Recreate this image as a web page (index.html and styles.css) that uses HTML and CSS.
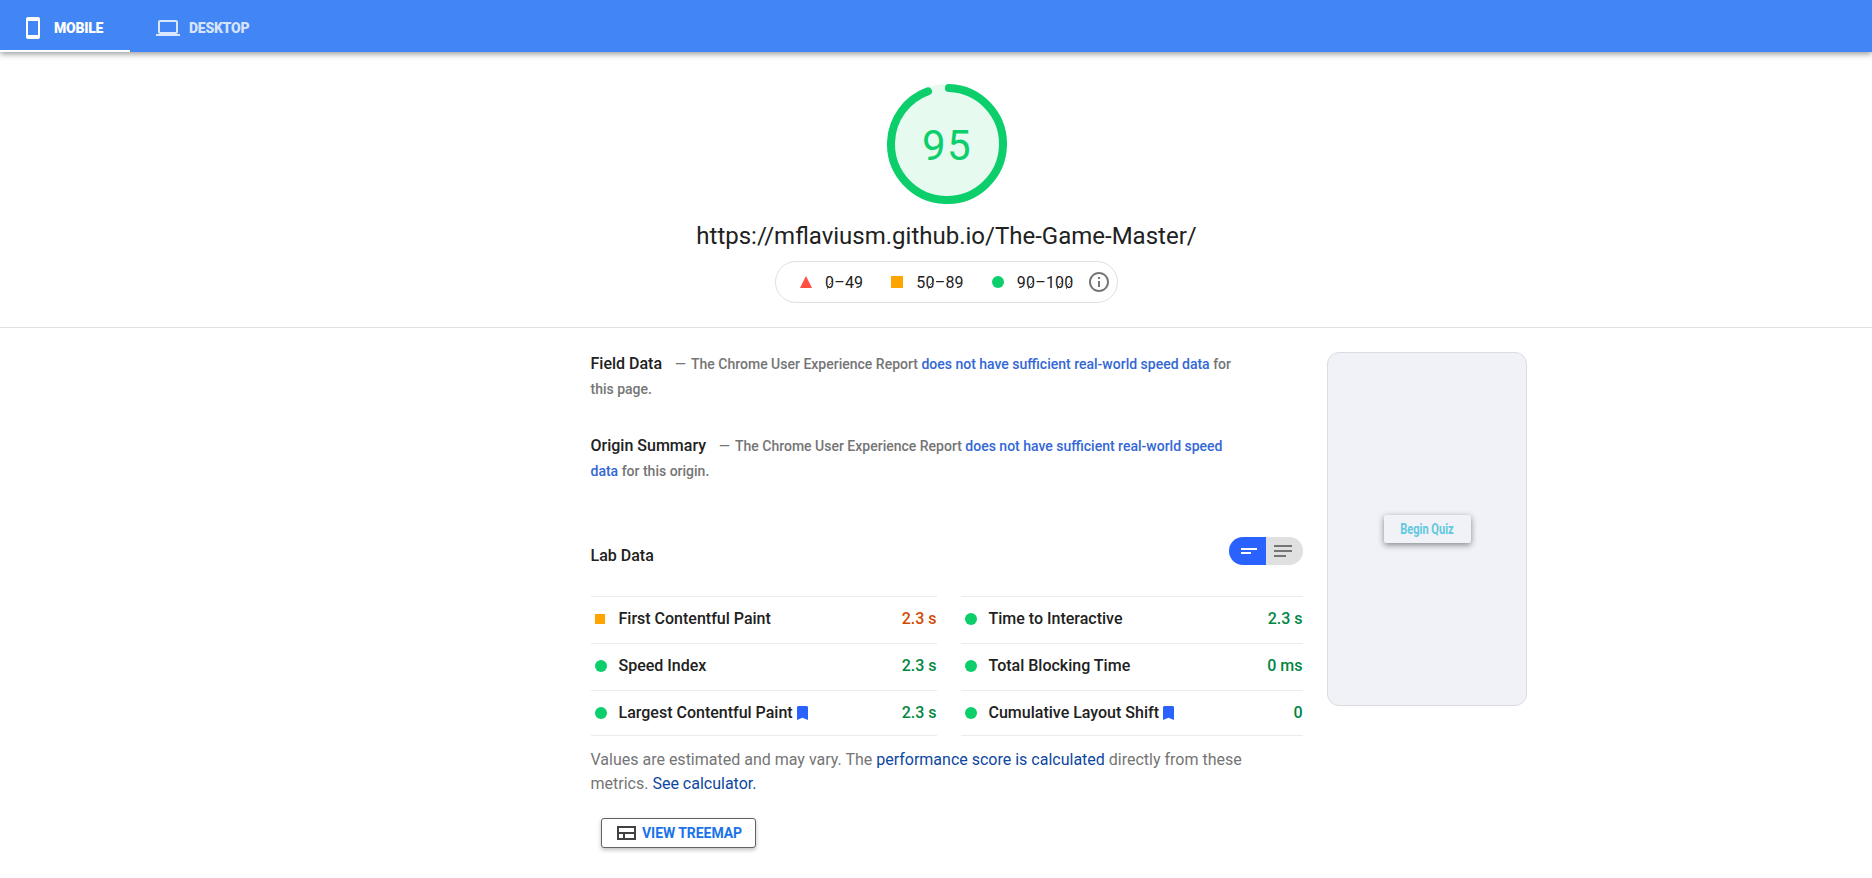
FILE: index.html
```html
<!DOCTYPE html>
<html lang="en">
<head>
<meta charset="utf-8">
<title>PageSpeed Insights</title>
<link rel="stylesheet" href="styles.css">
</head>
<body>
<header class="tabs">
  <div class="tab tab-active">
    <svg class="tab-icon" width="24" height="24" viewBox="0 0 24 24"><path fill="currentColor" d="M17 1H7a2 2 0 0 0-2 2v18a2 2 0 0 0 2 2h10a2 2 0 0 0 2-2V3a2 2 0 0 0-2-2zm0 18H7V5h10z"/></svg>
    <span>MOBILE</span>
  </div>
  <div class="tab">
    <svg class="tab-icon" width="24" height="24" viewBox="0 0 24 24"><path fill="currentColor" d="M20 18c1.1 0 2-.9 2-2V6c0-1.1-.9-2-2-2H4c-1.1 0-2 .9-2 2v10c0 1.1.9 2 2 2H0v2h24v-2zM4 6h16v10H4z"/></svg>
    <span>DESKTOP</span>
  </div>
</header>
<section class="summary">
  <div class="gauge">
    <svg class="gauge-arc" width="120" height="120" viewBox="0 0 120 120"><circle cx="60" cy="60" r="60" fill="#e6faf0"/><circle cx="60" cy="60" r="56" fill="none" stroke="#0cce6b" stroke-width="8" stroke-linecap="round" stroke-dasharray="330 352" transform="rotate(-88 60 60)"/></svg>
    <span class="score">95</span>
  </div>
  <h1 class="url">https://mflaviusm.github.io/The-Game-Master/</h1>
  <div class="scale">
    <span class="range"><svg width="12" height="12"><path fill="#ff4e42" d="M6 0l6 12H0z"/></svg><span class="mono"><i class="zero">0</i>–49</span></span>
    <span class="range"><svg width="12" height="12"><path fill="#ffa400" d="M0 0h12v12H0z"/></svg><span class="mono">5<i class="zero">0</i>–89</span></span>
    <span class="range"><svg width="12" height="12"><circle cx="6" cy="6" r="6" fill="#0cce6b"/></svg><span class="mono">9<i class="zero">0</i>–1<i class="zero">0</i><i class="zero">0</i></span></span>
    <svg class="info" width="24" height="24" viewBox="0 0 24 24"><path fill="#757575" d="M11 17h2v-6h-2zm1-15C6.480 2 2 6.480 2 12s4.480 10 10 10 10-4.480 10-10S17.520 2 12 2zm0 18c-4.410 0-8-3.590-8-8s3.590-8 8-8 8 3.590 8 8-3.590 8-8 8zM11 9h2V7h-2z"/></svg>
  </div>
</section>
<main class="report">
  <div class="data">
    <p class="field"><b class="heading">Field Data</b><span class="dash">—</span> The Chrome User Experience Report <a>does not have sufficient real-world speed data</a> for this page.</p>
    <p class="field origin"><b class="heading">Origin Summary</b><span class="dash">—</span> The Chrome User Experience Report <a>does not have sufficient real-world speed data</a> for this origin.</p>
    <div class="lab">
      <b class="heading">Lab Data</b>
      <svg class="toggle" width="74" height="28"><path fill="#2962ff" d="M14 0h23v28H14a14 14 0 0 1 0-28z"/><path fill="#e0e0e0" d="M37 0h23a14 14 0 0 1 0 28H37z"/><path fill="#fff" d="M12 11h16v2H12zM12 15h10v2H12z"/><path fill="#757575" d="M45 8h18v2H45zM45 13h18v2H45zM45 18h12v2H45z"/></svg>
    </div>
    <div class="metrics">
      <div class="column">
        <div class="metric"><span class="mark average"></span><span class="name">First Contentful Paint</span><span class="value value-average">2.3 s</span></div>
        <div class="metric"><span class="mark"></span><span class="name">Speed Index</span><span class="value">2.3 s</span></div>
        <div class="metric last"><span class="mark"></span><span class="name">Largest Contentful Paint</span><svg class="bookmark" width="11" height="14"><path fill="#2962ff" d="M1 0h9l1 1v13l-5.500-2.300L0 14V1z"/></svg><span class="value">2.3 s</span></div>
      </div>
      <div class="column">
        <div class="metric"><span class="mark"></span><span class="name">Time to Interactive</span><span class="value">2.3 s</span></div>
        <div class="metric"><span class="mark"></span><span class="name">Total Blocking Time</span><span class="value">0 ms</span></div>
        <div class="metric last"><span class="mark"></span><span class="name">Cumulative Layout Shift</span><svg class="bookmark" width="11" height="14"><path fill="#2962ff" d="M1 0h9l1 1v13l-5.500-2.300L0 14V1z"/></svg><span class="value">0</span></div>
      </div>
    </div>
    <p class="note">Values are estimated and may vary. The <a>performance score is calculated</a> directly from these metrics. <a>See calculator.</a></p>
    <button class="treemap">
      <svg width="19" height="14"><path fill="none" stroke="#424242" stroke-width="2" d="M1 1h17v12H1zM1 7h17M7 7v6"/></svg>
      <span>VIEW TREEMAP</span>
    </button>
  </div>
  <div class="phone"><div class="quiz"><span class="quiz-text">Begin Quiz</span></div></div>
</main>
</body>
</html>
```
FILE: styles.css
```css
* { box-sizing: border-box; }
body {
  margin: 0;
  height: 878px;
  overflow: hidden;
  background: #fff;
  color: #212121;
  font-family: Roboto, "Liberation Sans", sans-serif;
}
p, h1 { margin: 0; }

.tabs {
  display: flex;
  height: 52px;
  background: #4285f4;
  box-shadow: 0 2px 6px rgba(0, 0, 0, .4);
}
.tab {
  display: flex;
  align-items: center;
  gap: 9px;
  height: 52px;
  padding: 3px 26px 0 26px;
  color: rgba(255, 255, 255, .8);
  font-size: 14px;
  font-weight: 900;
  letter-spacing: -.250px;
}
.tab-active {
  width: 130px;
  padding: 5px 0 0 21px;
  border-bottom: 2px solid #fff;
  color: #fff;
}

.summary {
  display: flex;
  flex-direction: column;
  align-items: center;
  height: 276px;
  padding: 32px 0 0 21px;
  border-bottom: 1px solid #e0e0e0;
}
.gauge { display: grid; place-items: center; width: 120px; height: 120px; }
.gauge > * { grid-area: 1 / 1; }
.score {
  padding: 3px 0 0 1px;
  color: #0cce6b;
  font-size: 42px;
  letter-spacing: 1.500px;
  line-height: 48px;
}
.url {
  margin-top: 16px;
  font-size: 24px;
  font-weight: 400;
  line-height: 32px;
}
.scale {
  display: flex;
  align-items: center;
  width: 343px;
  height: 42px;
  margin-top: 9px;
  padding-left: 24px;
  border: 1px solid #e0e0e0;
  border-radius: 21px;
}
.range { display: flex; align-items: center; gap: 13px; margin-right: 28px; }
.range:nth-child(3) { margin-right: 13px; }
.mono { padding-top: 1px; font-size: 16px; letter-spacing: .200px; line-height: 24px; }
.zero {
  font-style: normal;
  background: linear-gradient(122deg, transparent 47%, #555 48%, #555 52%, transparent 53%) 1px 6px / 8px 10px no-repeat;
}

.report { display: flex; align-items: flex-start; gap: 24px; padding: 24px 0 0 590.500px; }
.data { width: 712.500px; }
.field {
  width: 660px;
  height: 82px;
  margin-top: -1px;
  color: #757575;
  font-size: 14px;
  font-weight: 500;
  line-height: 25px;
}
.origin { margin-top: 0; margin-bottom: 1px; }
.heading { color: #212121; font-size: 16px; font-weight: 500; }
.dash { margin: 0 2px 0 13px; }
.field a { color: #3367d6; }
.lab { display: flex; justify-content: space-between; height: 80px; padding-top: 21px; }
.lab .heading { padding-top: 9px; }
.toggle { display: block; }
.metrics { display: flex; gap: 24px; }
.column { width: 346px; border-bottom: 1px solid #ebebeb; }
.column + .column { width: 342px; }
.metric {
  display: flex;
  align-items: center;
  height: 47px;
  padding-bottom: 3px;
  border-top: 1px solid #ebebeb;
  font-size: 16px;
  font-weight: 500;
  line-height: 24px;
}
.last { height: 45px; padding-bottom: 1px; }
.mark { width: 12px; height: 12px; margin: 1px 12px 0 4px; border-radius: 50%; background: #0cce6b; }
.average { width: 10px; height: 10px; margin-right: 14px; border-radius: 0; background: #ffa400; }
.bookmark { margin-left: 4px; }
.value { margin-left: auto; color: #018642; }
.value-average { color: #d04900; }
.note { width: 660px; margin-top: 12px; color: #757575; font-size: 16px; line-height: 24px; }
.note a { color: #0d47a1; }
.treemap {
  display: flex;
  align-items: center;
  gap: 6px;
  width: 155px;
  height: 30px;
  margin: 22px 0 0 10.500px;
  padding: 0 0 0 15px;
  border: 1px solid #5f6368;
  border-radius: 3px;
  background: #fff;
  box-shadow: 0 2px 4px rgba(0, 0, 0, .25);
  color: #1a73e8;
  font: 700 14px Roboto, sans-serif;
  letter-spacing: -.050px;
}
.treemap span { padding-bottom: 1px; }
.phone {
  display: grid;
  place-items: center;
  width: 200px;
  height: 354px;
  border: 1px solid #dadce0;
  border-radius: 12px;
  background: #f0f2f8;
}
.quiz {
  display: flex;
  align-items: center;
  justify-content: center;
  width: 87px;
  height: 28px;
  border-radius: 2px;
  background: #f0f2f8;
  box-shadow: 0 2px 6px rgba(0, 0, 0, .45);
}
.quiz-text {
  color: #62c8df;
  font-size: 14px;
  font-weight: 700;
  white-space: nowrap;
  transform: scaleX(.79);
}
```
